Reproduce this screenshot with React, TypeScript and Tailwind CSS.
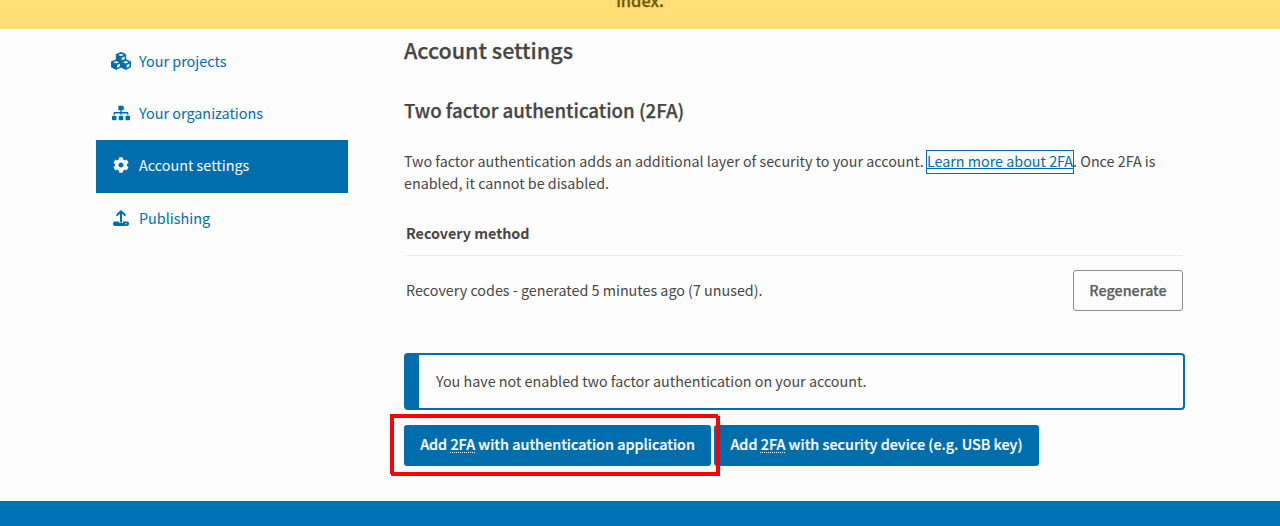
import type { ReactNode } from "react";
import { FaSitemap, FaCog } from "react-icons/fa";

function Cube({ x, y }: { x: number; y: number }) {
  return (
    <g transform={`translate(${x} ${y})`}>
      <path d="M0-4.7 4.7-2.8V2.6L0 4.9-4.7 2.6V-2.8Z" fill="currentColor" stroke="currentColor" strokeWidth="1" strokeLinejoin="round" />
      <path d="M0-3.5 2.9-2.3 0-1.1-2.9-2.3Z" fill="#fdfdfd" />
      <path d="M.8.5 3.7-.8V1.9L.8 3.3Z" fill="#fdfdfd" />
    </g>
  );
}

function CubesIcon() {
  return (
    <svg viewBox="0 0 20 18" className="h-[18px] w-5 shrink-0">
      <Cube x={10} y={5.2} />
      <Cube x={5.2} y={12.5} />
      <Cube x={14.8} y={12.5} />
    </svg>
  );
}

function UploadIcon() {
  return (
    <svg viewBox="0 0 16 16" className="h-4 w-4" fill="none" stroke="currentColor">
      <path d="M8 11.5V2M4.2 5 8 1.3 11.8 5" strokeWidth="2" strokeLinecap="round" strokeLinejoin="round" />
      <path d="M2 11.5h4v1.2h4v-1.2h4a2 2 0 0 1 2 2v.5a2 2 0 0 1-2 2H2a2 2 0 0 1-2-2v-.5a2 2 0 0 1 2-2Z" fill="currentColor" stroke="none" />
      <circle cx="13" cy="13.7" r=".7" fill="#fdfdfd" stroke="none" />
    </svg>
  );
}

function NavItem({ icon, label, active = false }: { icon: ReactNode; label: string; active?: boolean }) {
  return (
    <a className={active ? "flex h-[53px] items-center bg-[#006dad] pb-[3px] pl-[14px] text-[#fdfdfd]" : "flex h-[52px] items-center pb-0.5 pl-[14px] text-[#006dad]"}>
      <span className="flex w-[22px] justify-center">{icon}</span>
      <span className="ml-[7px] whitespace-nowrap text-[14.4px]">{label}</span>
    </a>
  );
}

function ActionButton({ rest, width }: { rest: string; width: string }) {
  return (
    <button className={`${width} h-[41px] whitespace-nowrap rounded-[3px] bg-[#006dad] pb-[3px] text-center text-[14.38px] font-medium text-[#fdfdfd] [-webkit-text-stroke:0.2px]`}>
      Add <abbr className="underline decoration-dotted decoration-1 underline-offset-2">2FA</abbr> {rest}
    </button>
  );
}

export default function App() {
  return (
    <div className="flex h-[526px] flex-col overflow-hidden bg-[#fdfdfd] font-['Noto_Sans_CJK_SC',sans-serif] text-[14.325px] leading-[22px] text-[#464646]">
      <header className="flex h-[29px] shrink-0 justify-center overflow-hidden bg-[#ffdf76] text-[16.4px] font-medium text-[#6f5900] [-webkit-text-stroke:0.3px]">
        <span className="-mt-[11px]">index.</span>
      </header>
      <div className="flex h-[472px] shrink-0 pl-24">
        <nav className="w-[252px] pt-[7px]">
          <NavItem icon={<CubesIcon />} label="Your projects" />
          <NavItem icon={<FaSitemap size={18} />} label="Your organizations" />
          <NavItem icon={<FaCog size={16} />} label="Account settings" active />
          <NavItem icon={<UploadIcon />} label="Publishing" />
        </nav>
        <main className="ml-14 w-[781px]">
          <h1 className="mt-[7px] h-7 text-[21.5px] font-medium leading-7 [-webkit-text-stroke:0.25px]">Account settings</h1>
          <h2 className="mt-8 h-7 text-[18.7px] font-medium leading-7 [-webkit-text-stroke:0.25px]">Two factor authentication (2FA)</h2>
          <p className="mt-[26px] whitespace-nowrap">
            Two factor authentication adds an additional layer of security to your account. <a className="-mb-1 inline-block h-[22px] leading-5 text-[#006dad] underline outline-1 outline-[#006dad]">Learn more about 2FA</a>. Once 2FA is<br />enabled, it cannot be disabled.
          </p>
          <section className="ml-0.5 mt-7 w-[777px]">
            <h3 className="h-[34px] border-b border-[#ebebeb] font-bold">Recovery method</h3>
            <div className="mt-3.5 flex h-[41px] items-center justify-between">
              <span className="pb-0.5">Recovery codes - generated 5 minutes ago (7 unused).</span>
              <button className="h-[41px] w-[110px] rounded-[3px] border border-[#8c8c8c] pb-0.5 font-medium text-[#5e5e5e] [-webkit-text-stroke:0.25px]">Regenerate</button>
            </div>
          </section>
          <div className="mt-[42px] flex h-[57px] items-center rounded border-2 border-l-[15px] border-[#006dad] pb-0.5 pl-[17px]">
            You have not enabled two factor authentication on your account.
          </div>
          <div className="relative mt-[15px] flex gap-[3px]">
            <ActionButton width="w-[307px]" rest="with authentication application" />
            <ActionButton width="w-[325px]" rest="with security device (e.g. USB key)" />
            <svg className="absolute -left-[14px] -top-[12px] h-[64px] w-[331px]" viewBox="0 0 331 64" fill="none" stroke="#ff0000" strokeWidth="4">
              <path d="M2 61V3H328M328 3V63M1 61H330" />
            </svg>
          </div>
        </main>
      </div>
      <footer className="h-[25px] shrink-0 bg-[#0073b7]" />
    </div>
  );
}
